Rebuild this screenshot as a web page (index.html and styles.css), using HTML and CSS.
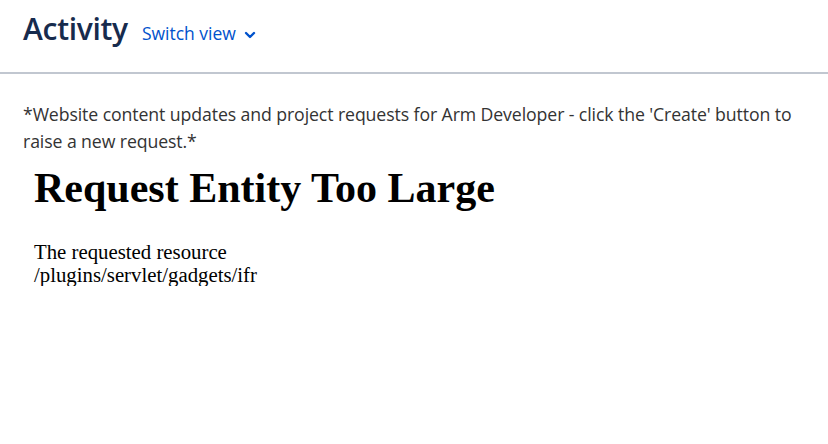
FILE: index.html
```html
<!DOCTYPE html>
<html lang="en">
<head>
    <meta charset="UTF-8">
    <title>Activity</title>
    <link rel="stylesheet" href="styles.css">
</head>
<body>

    <!-- page header -->
    <div class="page-header">
        <h1 class="page-title">Activity</h1>
        <button class="switch-view">
            Switch view
            <svg class="chevron" width="12" height="8" viewBox="0 0 12 8">
                <path d="M2 2 L6 6 L10 2" fill="none" stroke="#0052cc" stroke-width="2.4" stroke-linecap="round" stroke-linejoin="round"/>
            </svg>
        </button>
    </div>

    <div class="dashboard">
        <p class="description">*Website content updates and project requests for Arm Developer - click the 'Create' button to raise a new request.*</p>

        <!-- gadget frame with the server error -->
        <div class="gadget">
            <h1>Request Entity Too Large</h1>
            <p>The requested resource<br>/plugins/servlet/gadgets/ifr</p>
        </div>
    </div>

</body>
</html>
```

FILE: styles.css
```css
body {
    margin: 0;
    padding: 0;
    background-color: #fff;
    font-family: "Open Sans", "Noto Sans", sans-serif;
}

.page-header {
    display: flex;
    align-items: baseline;
    padding: 8px 23px 0;
    height: 64px;
    border-bottom: 2px solid #c1c7d0;
}

.page-title {
    margin: 0;
    font-size: 30px;
    font-weight: 600;
    color: #172b4d;
    letter-spacing: -0.3px;
}

.switch-view {
    margin-left: 14px;
    padding: 0;
    border: none;
    background: none;
    color: #0052cc;
    font-family: inherit;
    font-size: 17.5px;
    cursor: pointer;
}

.chevron {
    margin-left: 4px;
    vertical-align: 1px;
}

.dashboard {
    padding: 0 20px 0 23px;
}

.description {
    margin: 27px 0 0;
    font-size: 17.7px;
    line-height: 27px;
    color: #333;
    letter-spacing: -0.1px;
}

/* iframe content is shown zoomed */
.gadget {
    padding: 0 11px;
    font-family: "Liberation Serif", serif;
    color: #000;
}

.gadget h1 {
    margin: 9px 0 0;
    font-size: 42px;
    line-height: 48px;
}

.gadget p {
    margin: 28px 0 0;
    font-size: 20.8px;
    line-height: 23px;
}
```
